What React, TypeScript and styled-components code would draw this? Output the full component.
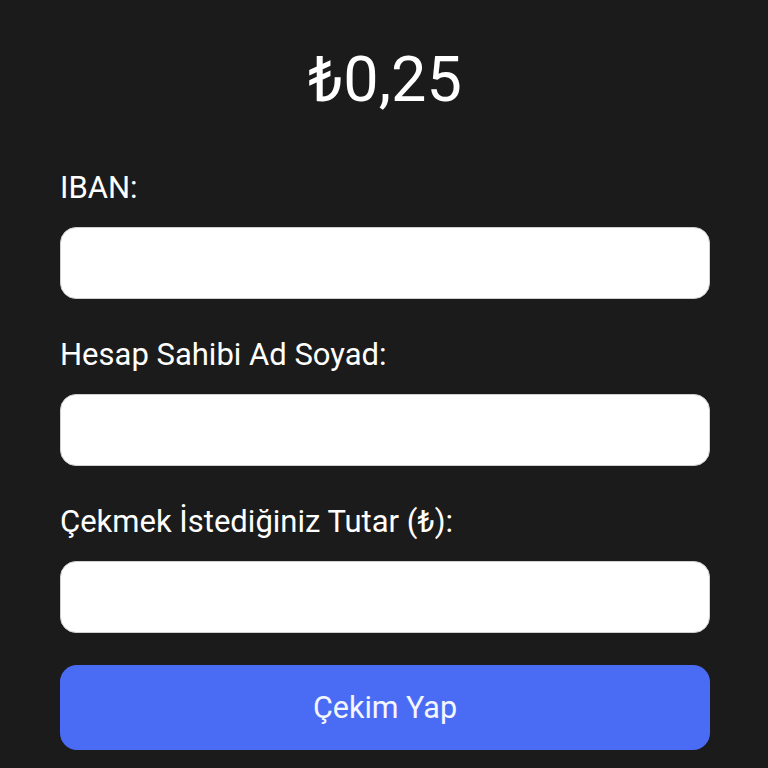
import React from "react";
import styled, { createGlobalStyle } from "styled-components";

const Global = createGlobalStyle`
  html, body {
    margin: 0;
    padding: 0;
    background: #1b1b1b;
  }
  body {
    font-family: Roboto, "Noto Sans", "Liberation Sans", sans-serif;
    color: #ffffff;
  }
  * { box-sizing: border-box; }
`;

const Page = styled.div`
  min-height: 768px;
  background: #1b1b1b;
  padding: 44px 58px 0 60px;
  display: flex;
  flex-direction: column;
`;

const Amount = styled.div`
  font-size: 63px;
  line-height: 72px;
  font-weight: 400;
  text-align: center;
  color: #ffffff;
  margin-bottom: 54px;
`;

const Form = styled.form`
  display: flex;
  flex-direction: column;
  gap: 38px;
`;

const Field = styled.div`
  display: flex;
  flex-direction: column;
  gap: 21px;
`;

const Label = styled.label`
  font-size: 31px;
  line-height: 36px;
  color: #ffffff;
`;

const Input = styled.input`
  height: 72px;
  width: 100%;
  border: 1px solid #cfcfcf;
  border-radius: 16px;
  background: #ffffff;
  font-family: inherit;
  font-size: 28px;
  padding: 0 20px;
  outline: none;
`;

const Button = styled.button`
  margin-top: -6px;
  height: 85px;
  width: 100%;
  border: none;
  border-radius: 17px;
  background: #4a6cf5;
  color: #f4f6ff;
  font-family: inherit;
  font-size: 30.5px;
  cursor: pointer;
`;

export default function App() {
  return (
    <>
      <Global />
      <Page>
        <Amount>₺0,25</Amount>
        <Form onSubmit={(e) => e.preventDefault()}>
          <Field>
            <Label htmlFor="iban">IBAN:</Label>
            <Input id="iban" type="text" />
          </Field>
          <Field>
            <Label htmlFor="name">Hesap Sahibi Ad Soyad:</Label>
            <Input id="name" type="text" />
          </Field>
          <Field>
            <Label htmlFor="amount">Çekmek İstediğiniz Tutar (₺):</Label>
            <Input id="amount" type="text" />
          </Field>
          <Button type="submit">Çekim Yap</Button>
        </Form>
      </Page>
    </>
  );
}
